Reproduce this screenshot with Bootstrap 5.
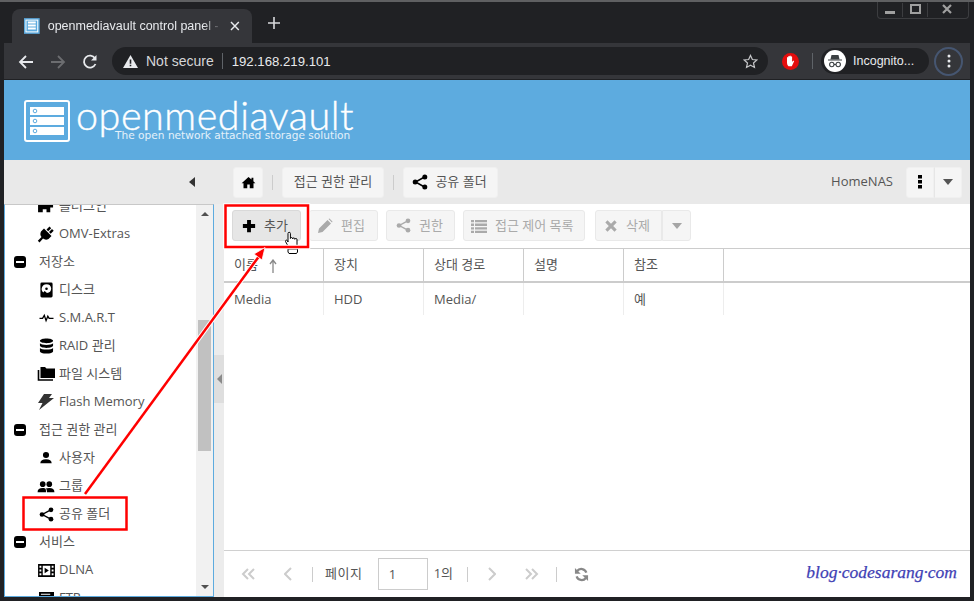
<!DOCTYPE html>
<html lang="ko">
<head>
<meta charset="utf-8">
<title>openmediavault control panel</title>
<link href="https://cdn.jsdelivr.net/npm/bootstrap@5.3.0/dist/css/bootstrap.min.css" rel="stylesheet">
<style>
html,body{height:100%;margin:0;overflow:hidden}
body{background:#202124;font-family:"Open Sans","Noto Sans CJK KR",sans-serif;font-size:13px;color:#555}
.win{width:974px;height:601px;position:relative;border-top:2px solid #5f6062;padding:0 4px 4px}
.tabstrip{height:41px;margin:0 -4px;padding:7px 0 0 12px}
.chrome-tab{width:240px;height:34px;background:#35363a;border-radius:8px 8px 0 0;padding:0 12px;color:#e8eaed;font:12px/34px "Liberation Sans",sans-serif;gap:8px}
.tab-title{width:174px;overflow:hidden;white-space:nowrap;-webkit-mask-image:linear-gradient(90deg,#000 155px,transparent 174px);mask-image:linear-gradient(90deg,#000 155px,transparent 174px);font-size:12.5px}
.new-tab{margin-left:16px;margin-top:8px}
.winctl{position:absolute;top:0;right:5px;width:92px;height:17px;border:1px solid #3c3d40;border-top:0;border-radius:0 0 4px 4px}
.winctl span{width:25px;flex:none;border-right:1px solid #3c3d40}
.winctl span:last-child{border:0;flex:1 1 0;width:auto}
.browserbar{height:37px;background:#35363a;border-bottom:1px solid #202124;padding-left:14px}
.nav-ico{width:20px;flex:none;margin-right:12px}
.omnibox{margin-left:-2px;width:656px;height:28px;border-radius:14px;background:#202124;padding:0 10px 0 11px;color:#e8eaed;font:14px "Liberation Sans",sans-serif}
.omnibox .ns{color:#d5d6d8;margin:0 8px 0 8px}
.omnibox .ip{font-size:13.2px}
.omni-sep{width:1px;height:16px;background:#5f6368;margin-right:9px}
.star{margin-left:auto}
.ext{margin-left:14px}
.bar-sep{width:1px;height:16px;background:#5f6368;margin:0 8px 0 13px}
.incog{width:108px;height:26px;border-radius:13px;background:#202124;color:#e8eaed;font:12.5px "Liberation Sans",sans-serif;padding-left:3px;gap:7px}
.kebab{width:29px;height:29px;border-radius:50%;border:2px solid #465671;margin-left:5px;flex:none}
.omv-head{height:80px;background:#5dabdf;padding:20px 0 0 20px;position:relative}
.omv-name{font:300 39.5px/1 Lato,sans-serif;color:#fff;position:absolute;left:72px;top:15px;letter-spacing:.55px;-webkit-text-stroke:.4px #fff}
.omv-tag{font:10.6px/1 "DejaVu Sans",sans-serif;color:#e4f1fa;position:absolute;left:111px;top:50px;white-space:nowrap}
.topbar{height:44px;background:#e9e9e9}
.side-top{width:220px;flex:none;padding-right:29px}
.tri-l{width:0;height:0;border:5px solid transparent;border-left:0;border-right:6px solid #333}
.crumbs{gap:9px;padding-left:9px}
.omv-btn{--bs-btn-padding-x:0;--bs-btn-padding-y:0;--bs-btn-font-size:13px;--bs-btn-border-radius:3px;height:31px;background:#f5f5f5;border:1px solid #f0f0f0;color:#555;display:inline-flex;align-items:center;justify-content:center;white-space:nowrap;gap:7px}
.omv-btn:disabled{opacity:1;color:#aaa;background:#f5f5f5;border-color:#e9e9e9}
.omv-btn.active-btn{background:#e6e6e6;border-color:#d9d9d9;color:#555}
.vsep{width:1px;height:15px;background:#ccc;flex:none}
.host{margin-left:auto;margin-right:4px;color:#555}
.split-left{border-radius:3px 0 0 3px}
.split-right{border-radius:0 3px 3px 0;border-left:1px solid #e6e6e6}
.tri-d{width:0;height:0;border:5px solid transparent;border-bottom:0;border-top:6px solid #555}
.bw-home{width:30px}.bw-crumb{width:102px}.bw-share{width:95px;padding-right:2px}.bw-28{width:28px}
.bw-tool{justify-content:flex-start;gap:8px;padding-left:8px}
.bw-add{width:69px;padding-left:9px}.bw-edit{width:69px;padding-left:7px}.bw-perm{width:69px;padding-left:9px}.bw-acl{width:122px;padding-left:7px}.bw-del{width:67px;padding-left:8px}.bw-caret{width:29px}
.del-group{margin-left:2px}
.content{height:393px}
.tree-pane{width:210px;flex:none;background:#fff;border:solid #5dabdf;border-width:0 1px 1px 1px;border-top:1px solid #c8c8c8;position:relative;overflow:hidden}
.tree-scroll{margin-top:-13px;width:192px}
.tree-row{height:28px;color:#555;white-space:nowrap}
.tree-group{padding-left:9px;gap:13px}
.tree-group b{width:12px;height:12px;background:#000;border-radius:3px;display:flex;align-items:center;justify-content:center;flex:none}
.tree-group b i{width:8px;height:2px;background:#fff;display:block}
.tree-leaf{padding-left:32px}
.ico-box{width:18px;flex:none;margin-right:4px;display:flex;justify-content:center}
.omv-dark{fill:#333}
.vbar{position:absolute;right:0;top:0;bottom:0;width:17px;background:#f1f1f1}
.vthumb{position:absolute;left:2px;right:2px;top:115px;height:131px;background:#c1c1c1}
.tri-u{position:absolute;left:5px;top:7px;width:0;height:0;border:4px solid transparent;border-top:0;border-bottom:4px solid #505050}
.tri-b{position:absolute;left:5px;bottom:7px;width:0;height:0;border:4px solid transparent;border-bottom:0;border-top:4px solid #505050}
.splitter{width:10px;flex:none;background:#ececec;display:flex;align-items:center}
.split-handle{width:10px;height:48px;background:#dedede;display:flex;align-items:center;margin-top:-43px;padding-left:3px}
.tri-g{width:0;height:0;border:5px solid transparent;border-left:0;border-right:5px solid #8a8a8a}
.main-pane{flex:1 1 0;min-width:0;background:#fff}
.actions{height:44px;padding:6px 0 0 8px;gap:8px}
.grid-wrap{flex:1 1 0;border-top:1px solid #ccc}
.data-grid{table-layout:fixed;width:100%;margin:0;--bs-table-color:#555;font-size:13px;border-collapse:separate;border-spacing:0}
.data-grid th,.data-grid td{font-weight:400;padding:0 10px;vertical-align:middle;border:0;color:#555;white-space:nowrap}
.data-grid th{height:34px;border-right:1px solid #ccc;border-bottom:2px solid #ccc}
.data-grid td{border-right:1px solid #ededed;height:32px;padding-top:1px}
.data-grid .cw{width:100px}
.data-grid .filler{border-right:0}
.pager{height:47px;border-top:1px solid #d0d0d0;padding-left:16px;position:relative;color:#555}
.pg-ico{width:16px;display:flex;justify-content:center;flex:none}
.pg-label{letter-spacing:.6px}
.pg-num{width:50px;height:32px;border:1px solid #ccc;padding:0 10px;margin:0 6px 0 15px;font-size:13px;color:#555;font-family:inherit;background:#fff;border-radius:0}
.pg-sep2{margin-left:14px}
.watermark{position:absolute;right:13px;top:11px;font:italic 17.5px "Liberation Serif",serif;color:#3f3fb5;-webkit-text-stroke:.25px #3f3fb5;text-shadow:0 0 2px #fff,0 0 2px #fff}
.overlay{position:absolute;left:0;top:-2px;pointer-events:none}
</style>
</head>
<body>
<svg width="0" height="0" class="position-absolute">
<defs>
<symbol id="i-home" viewBox="0 0 24 24"><path d="M12 3 1 13h3v8h6v-6h4v6h6v-8h3l-3.200-3V4.500h-3v2.700z"/></symbol>
<symbol id="i-plus" viewBox="0 0 16 16"><path d="M5.800 1h4.400v4.800H15v4.400h-4.800V15H5.800v-4.800H1V5.800h4.800z"/></symbol>
<symbol id="i-share" viewBox="0 0 16 16"><path d="M12.500 3 3.500 8l9 5" fill="none" stroke="currentColor" stroke-width="1.500"/><circle cx="12.800" cy="3" r="2.500"/><circle cx="3.200" cy="8" r="2.500"/><circle cx="12.800" cy="13" r="2.500"/></symbol>
<symbol id="i-pencil" viewBox="0 0 16 16"><path d="M1 15l1-4.500L10.500 2l3.500 3.500L5.500 14zM11.500 1l1-.5 3 3-.5 1z"/></symbol>
<symbol id="i-list" viewBox="0 0 16 16"><path d="M0 2h3v2.300H0zM4 2h12v2.300H4zM0 5.600h3v2.300H0zM4 5.600h12v2.300H4zM0 9.200h3v2.300H0zM4 9.200h12v2.300H4zM0 12.800h3v2.300H0zM4 12.800h12v2.300H4z"/></symbol>
<symbol id="i-x" viewBox="0 0 16 16"><path d="M4 1.500 8 5.500l4-4L14.500 4l-4 4 4 4-2.500 2.500-4-4-4 4L1.500 12l4-4-4-4z"/></symbol>
<symbol id="i-plug" viewBox="0 0 18 18"><path d="M7 3.500 14.500 11l-3 3Q8.500 15.500 6 13.500L2.500 17.500 .8 15.800 4.500 12Q2.500 9.500 4 6.500zM9.500 4.500 12.500 1.500l1.700 1.700-3 3zM12 7l3-3 1.700 1.700-3 3z"/></symbol>
<symbol id="i-hdd" viewBox="0 0 16 16"><path fill-rule="evenodd" d="M3 0h10a1.500 1.500 0 0 1 1.500 1.500v13A1.500 1.500 0 0 1 13 16H3a1.500 1.500 0 0 1-1.500-1.500v-13A1.500 1.500 0 0 1 3 0zM8 2a5 5 0 0 0-3.500 8.700L6 9l2.500 2.300a5 5 0 0 0 4.500-4.800A5 5 0 0 0 8 2zM8 5.200a1.400 1.400 0 1 1 0 2.800A1.400 1.400 0 0 1 8 5.200z"/></symbol>
<symbol id="i-pulse" viewBox="0 0 16 16"><path d="M0 8.500h3.500L5.500 5l2 6 2-5 1.500 2.500H16" fill="none" stroke="currentColor" stroke-width="1.500"/></symbol>
<symbol id="i-db" viewBox="0 0 16 16"><path d="M8 0c4 0 7 1 7 2.500S12 5 8 5 1 4 1 2.500 4 0 8 0zM1 5c1 1.300 3.500 1.800 7 1.800S14 6.300 15 5v2.500C15 9 12 10 8 10S1 9 1 7.500zM1 10c1 1.300 3.500 1.800 7 1.800s6-.5 7-1.800v3.500c0 1.500-3 2.500-7 2.500s-7-1-7-2.500z"/></symbol>
<symbol id="i-folder" viewBox="0 0 18 16"><path d="M3.500 1H8l1.500 1.500H18V12H3.500z"/><path d="M1.500 4v10H16" fill="none" stroke="currentColor" stroke-width="1.600"/></symbol>
<symbol id="i-bolt" viewBox="0 0 16 16"><path d="M6 0h8l-3 4h5L1 16l3.500-7H0z"/></symbol>
<symbol id="i-user" viewBox="0 0 16 16"><circle cx="8" cy="4.500" r="3.500"/><path d="M1.500 14c0-3 2.500-4.500 6.500-4.500S14.500 11 14.500 14z"/></symbol>
<symbol id="i-users" viewBox="0 0 18 16"><circle cx="5.500" cy="5.500" r="3"/><circle cx="12.500" cy="5.500" r="3"/><path d="M0 14c0-3 2-4.500 5.500-4.500S9 11 9 14zM10 14c0-2-.5-3-1.300-3.800 1-.5 2.300-.7 3.800-.7C16 9.500 18 11 18 14z"/></symbol>
<symbol id="i-film" viewBox="0 0 18 16"><path fill-rule="evenodd" d="M0 1h18v14H0zM1.500 3v2h2V3zM1.500 7v2h2V7zM1.500 11v2h2v-2zM14.500 3v2h2V3zM14.500 7v2h2V7zM14.500 11v2h2v-2zM5 3v10h8V3zM7 5l4.500 3L7 11z"/></symbol>
<symbol id="i-puzzle" viewBox="0 0 18 16"><path d="M0 2h6V0h5v2h2v3h3v4h-3v5H9v-3H5v3H0z"/></symbol>
<symbol id="i-ftp" viewBox="0 0 18 16"><path fill-rule="evenodd" d="M1 1h16v5H1zM3 3v1h10V3z"/></symbol>
<symbol id="i-refresh" viewBox="0 0 16 16"><path d="M13.200 6A5.700 5.700 0 0 0 3.300 4.300M2.800 10a5.700 5.700 0 0 0 9.900 1.700" fill="none" stroke="currentColor" stroke-width="2.400"/><path d="M1 1v6.200h6.200zM15 15V8.800H8.800z"/></symbol>
</defs>
</svg>

<div class="win">
  <div class="tabstrip d-flex align-items-start">
    <div class="chrome-tab d-flex align-items-center">
      <svg width="16" height="16" viewBox="0 0 16 16" class="flex-none"><rect width="16" height="16" fill="#5dabdf"/><rect x="2" y="2" width="12" height="12" fill="none" stroke="#fff"/><path d="M4 4.500h8M4 7.500h8M4 10.500h8" stroke="#fff" stroke-width="2"/></svg>
      <span class="tab-title">openmediavault control panel - H</span>
      <svg width="10" height="10" viewBox="0 0 10 10" class="ms-1"><path d="M1 1l8 8M9 1l-8 8" stroke="#e8eaed" stroke-width="1.500"/></svg>
    </div>
    <svg class="new-tab" width="12" height="12" viewBox="0 0 12 12"><path d="M6 0v12M0 6h12" stroke="#d8d9db" stroke-width="1.600"/></svg>
  </div>
  <div class="winctl d-flex align-items-center">
    <span class="d-flex justify-content-center"><svg width="24" height="14" viewBox="0 0 24 14"><rect x="7" y="8" width="10" height="3" fill="#a0a0a0"/></svg></span>
    <span class="d-flex justify-content-center"><svg width="24" height="14" viewBox="0 0 24 14"><rect x="8" y="2" width="9" height="8" fill="none" stroke="#a0a0a0" stroke-width="2"/></svg></span>
    <span class="d-flex justify-content-center"><svg width="24" height="14" viewBox="0 0 24 14"><path d="M7 2l8 8M15 2l-8 8" stroke="#a0a0a0" stroke-width="2.200"/></svg></span>
  </div>

  <div class="browserbar d-flex align-items-center">
    <span class="nav-ico"><svg width="16" height="14" viewBox="0 0 16 14"><path d="M15 7H2M8 1 2 7l6 6" fill="none" stroke="#e8eaed" stroke-width="1.800"/></svg></span>
    <span class="nav-ico"><svg width="16" height="14" viewBox="0 0 16 14"><path d="M1 7h13M8 1l6 6-6 6" fill="none" stroke="#6c6d70" stroke-width="1.800"/></svg></span>
    <span class="nav-ico"><svg width="16" height="16" viewBox="0 0 16 16"><path d="M13.500 10A6 6 0 1 1 13 4.200" fill="none" stroke="#e8eaed" stroke-width="1.800"/><path d="M14.500 1v5.500H9z" fill="#e8eaed"/></svg></span>
    <div class="omnibox d-flex align-items-center">
      <svg width="15" height="13" viewBox="0 0 15 13"><path fill-rule="evenodd" d="M7.500 0 15 13H0zM6.700 4.500v4.300h1.600V4.500zM6.700 9.800v1.500h1.600V9.800z" fill="#e8eaed"/></svg>
      <span class="ns">Not secure</span><span class="omni-sep"></span><span class="ip">192.168.219.101</span>
      <svg class="star" width="15" height="15" viewBox="0 0 16 16"><path d="M8 1.500l2 4.400 4.700.5-3.500 3.200 1 4.700L8 11.900l-4.200 2.400 1-4.700L1.300 6.400 6 5.900z" fill="none" stroke="#c4c5c7" stroke-width="1.300"/></svg>
    </div>
    <svg class="ext" width="17" height="17" viewBox="0 0 17 17"><circle cx="8.500" cy="8.500" r="8.500" fill="#e50d0d"/><path d="M5 7.500V4.500a.7.700 0 0 1 1.200 0V3.500a.7.700 0 0 1 1.300 0V3a.7.700 0 0 1 1.300 0v.8a.7.700 0 0 1 1.300 0v5l1.200-1c.8-.3 1 .3.700.8L9.800 13.200H6.500C5.500 12.500 5 11 5 9.500z" fill="#fff"/></svg>
    <span class="bar-sep"></span>
    <div class="incog d-flex align-items-center">
      <svg width="22" height="22" viewBox="0 0 22 22"><circle cx="11" cy="11" r="11" fill="#fff"/><path d="M7.500 5h7l1 4.300H6.500zM4 9.500h14v1H4z" fill="#3c4043"/><circle cx="7.800" cy="14.500" r="2.200" fill="none" stroke="#3c4043" stroke-width="1.100"/><circle cx="14.200" cy="14.500" r="2.200" fill="none" stroke="#3c4043" stroke-width="1.100"/><path d="M10 14.500h2" stroke="#3c4043"/></svg>
      <span>Incognito...</span>
    </div>
    <div class="kebab d-flex align-items-center justify-content-center">
      <svg width="4" height="14" viewBox="0 0 4 14"><circle cx="2" cy="2" r="1.500" fill="#e8eaed"/><circle cx="2" cy="7" r="1.500" fill="#e8eaed"/><circle cx="2" cy="12" r="1.500" fill="#e8eaed"/></svg>
    </div>
  </div>

  <header class="omv-head">
    <svg width="46" height="42" viewBox="0 0 46 42" class="d-block"><rect x="1" y="1" width="44" height="40" rx="2" fill="none" stroke="#fff" stroke-width="2"/><rect x="6" y="7" width="34" height="8" fill="#fff"/><rect x="6" y="17" width="34" height="8" fill="#fff"/><rect x="6" y="27" width="34" height="8" fill="#fff"/><circle cx="11" cy="11" r="1.800" fill="none" stroke="#5dabdf"/><circle cx="11" cy="21" r="1.800" fill="none" stroke="#5dabdf"/><circle cx="11" cy="31" r="1.800" fill="none" stroke="#5dabdf"/></svg>
    <span class="omv-name">openmediavault</span>
    <span class="omv-tag">The open network attached storage solution</span>
  </header>

  <div class="topbar d-flex align-items-center">
    <div class="side-top d-flex justify-content-end"><span class="tri-l"></span></div>
    <div class="crumbs d-flex align-items-center flex-grow-1">
      <button class="btn omv-btn bw-home"><svg width="15" height="15"><use href="#i-home"/></svg></button>
      <span class="vsep"></span>
      <button class="btn omv-btn bw-crumb">접근 권한 관리</button>
      <span class="vsep"></span>
      <button class="btn omv-btn bw-share"><svg width="16" height="16" class="text-black"><use href="#i-share"/></svg>공유 폴더</button>
      <span class="host">HomeNAS</span>
      <div class="d-flex me-2">
        <button class="btn omv-btn split-left bw-28"><svg width="4" height="14" viewBox="0 0 4 14"><rect y="0" width="4" height="3.500"/><rect y="5" width="4" height="3.500"/><rect y="10" width="4" height="3.500"/></svg></button>
        <button class="btn omv-btn split-right bw-28"><span class="tri-d"></span></button>
      </div>
    </div>
  </div>

  <div class="content d-flex">
    <aside class="tree-pane">
      <div class="tree-scroll">
        <div class="tree-row tree-leaf d-flex align-items-center"><span class="ico-box"><svg width="17" height="15"><use href="#i-puzzle"/></svg></span>플러그인</div>
        <div class="tree-row tree-leaf d-flex align-items-center"><span class="ico-box"><svg width="18" height="18"><use href="#i-plug"/></svg></span>OMV-Extras</div>
        <div class="tree-row tree-group d-flex align-items-center"><b><i></i></b>저장소</div>
        <div class="tree-row tree-leaf d-flex align-items-center"><span class="ico-box"><svg width="15" height="16"><use href="#i-hdd"/></svg></span>디스크</div>
        <div class="tree-row tree-leaf d-flex align-items-center"><span class="ico-box"><svg width="15" height="14" class="text-black"><use href="#i-pulse"/></svg></span>S.M.A.R.T</div>
        <div class="tree-row tree-leaf d-flex align-items-center"><span class="ico-box"><svg width="15" height="16"><use href="#i-db"/></svg></span>RAID 관리</div>
        <div class="tree-row tree-leaf d-flex align-items-center"><span class="ico-box"><svg width="18" height="16" class="text-black"><use href="#i-folder"/></svg></span>파일 시스템</div>
        <div class="tree-row tree-leaf d-flex align-items-center"><span class="ico-box"><svg width="16" height="16" class="omv-dark"><use href="#i-bolt"/></svg></span>Flash Memory</div>
        <div class="tree-row tree-group d-flex align-items-center"><b><i></i></b>접근 권한 관리</div>
        <div class="tree-row tree-leaf d-flex align-items-center"><span class="ico-box"><svg width="14" height="14"><use href="#i-user"/></svg></span>사용자</div>
        <div class="tree-row tree-leaf d-flex align-items-center"><span class="ico-box"><svg width="18" height="15"><use href="#i-users"/></svg></span>그룹</div>
        <div class="tree-row tree-leaf d-flex align-items-center"><span class="ico-box"><svg width="15" height="15" class="text-black"><use href="#i-share"/></svg></span>공유 폴더</div>
        <div class="tree-row tree-group d-flex align-items-center"><b><i></i></b>서비스</div>
        <div class="tree-row tree-leaf d-flex align-items-center"><span class="ico-box"><svg width="17" height="15"><use href="#i-film"/></svg></span>DLNA</div>
        <div class="tree-row tree-leaf d-flex align-items-center"><span class="ico-box"><svg width="17" height="15"><use href="#i-ftp"/></svg></span>FTP</div>
      </div>
      <div class="vbar"><span class="tri-u"></span><span class="vthumb"></span><span class="tri-b"></span></div>
    </aside>
    <div class="splitter"><div class="split-handle"><span class="tri-g"></span></div></div>
    <main class="main-pane d-flex flex-column">
      <div class="actions d-flex align-items-start">
        <button class="btn omv-btn active-btn bw-tool bw-add"><svg width="14" height="14"><use href="#i-plus"/></svg>추가</button>
        <button class="btn omv-btn bw-tool bw-edit" disabled><svg width="16" height="16" fill="#aaa"><use href="#i-pencil"/></svg>편집</button>
        <button class="btn omv-btn bw-tool bw-perm" disabled><svg width="15" height="15" fill="#aaa"><use href="#i-share"/></svg>권한</button>
        <button class="btn omv-btn bw-tool bw-acl" disabled><svg width="16" height="16" fill="#aaa"><use href="#i-list"/></svg>접근 제어 목록</button>
        <div class="d-flex del-group">
          <button class="btn omv-btn split-left bw-tool bw-del" disabled><svg width="14" height="14" fill="#aaa"><use href="#i-x"/></svg>삭제</button>
          <button class="btn omv-btn split-right bw-caret" disabled><span class="tri-d opacity-50"></span></button>
        </div>
      </div>
      <div class="grid-wrap">
        <table class="table data-grid">
          <thead><tr>
            <th class="cw">이름 <svg width="8" height="14" viewBox="0 0 8 14" class="ms-2 align-text-bottom"><path d="M4 14V2M1 5l3-4 3 4" fill="none" stroke="#888" stroke-width="1.300"/></svg></th>
            <th class="cw">장치</th><th class="cw">상대 경로</th><th class="cw">설명</th><th class="cw">참조</th><th class="filler"></th>
          </tr></thead>
          <tbody><tr><td>Media</td><td>HDD</td><td>Media/</td><td></td><td>예</td><td class="filler"></td></tr></tbody>
        </table>
      </div>
      <div class="pager d-flex align-items-center">
        <span class="pg-ico"><svg width="14" height="12" viewBox="0 0 14 12"><path d="M7 1 2 6l5 5M13 1 8 6l5 5" fill="none" stroke="#ccc" stroke-width="2"/></svg></span>
        <span class="pg-ico ms-4"><svg width="8" height="14" viewBox="0 0 8 14"><path d="M7 1 1 7l6 6" fill="none" stroke="#ccc" stroke-width="2"/></svg></span>
        <span class="vsep ms-3"></span>
        <span class="ms-2 ps-1 pg-label">페이지</span>
        <input class="pg-num" value="1" aria-label="페이지">
        <span>1의</span>
        <span class="vsep pg-sep2"></span>
        <span class="pg-ico ms-3"><svg width="8" height="14" viewBox="0 0 8 14"><path d="M1 1l6 6-6 6" fill="none" stroke="#ccc" stroke-width="2"/></svg></span>
        <span class="pg-ico ms-4"><svg width="14" height="12" viewBox="0 0 14 12"><path d="M1 1l5 5-5 5M7 1l5 5-5 5" fill="none" stroke="#ccc" stroke-width="2"/></svg></span>
        <span class="vsep ms-3"></span>
        <span class="pg-ico ms-3"><svg width="15" height="15" fill="#888" color="#888"><use href="#i-refresh"/></svg></span>
        <span class="watermark">blog·codesarang·com</span>
      </div>
    </main>
  </div>

  <svg class="overlay" width="974" height="601" viewBox="0 0 974 601">
    <path d="M288 246 285.500 241.500a1 1 0 0 1 1.700-1L288 242V233.500a1.200 1.200 0 0 1 2.400 0V238.500a1.100 1.100 0 0 1 2.200.3 1.100 1.100 0 0 1 2.200.5 1.100 1.100 0 0 1 2.200.7V244L297 249H289z" fill="#fff" stroke="#000"/>
    <path d="M288 249h9.500v3l-1 1.500h-7.500l-1-1.500z" fill="#fff" stroke="#000"/>
    <g fill="none">
      <rect x="225.500" y="205.500" width="82.500" height="41.500" stroke="#fff" stroke-width="4.500"/>
      <rect x="23.500" y="497.500" width="103" height="32" stroke="#fff" stroke-width="4.500"/>
      <path d="M85 494 260 255" stroke="#fff" stroke-width="4.500"/>
      <rect x="225.500" y="205.500" width="82.500" height="41.500" stroke="#f00" stroke-width="2.500"/>
      <rect x="23.500" y="497.500" width="103" height="32" stroke="#f00" stroke-width="2.500"/>
      <path d="M85 494 260 255" stroke="#f00" stroke-width="2.500"/>
    </g>
    <path d="M265 247.500 262 260 254 254z" fill="#f00" stroke="#fff" stroke-width=".8"/>
  </svg>
</div>
</body>
</html>
